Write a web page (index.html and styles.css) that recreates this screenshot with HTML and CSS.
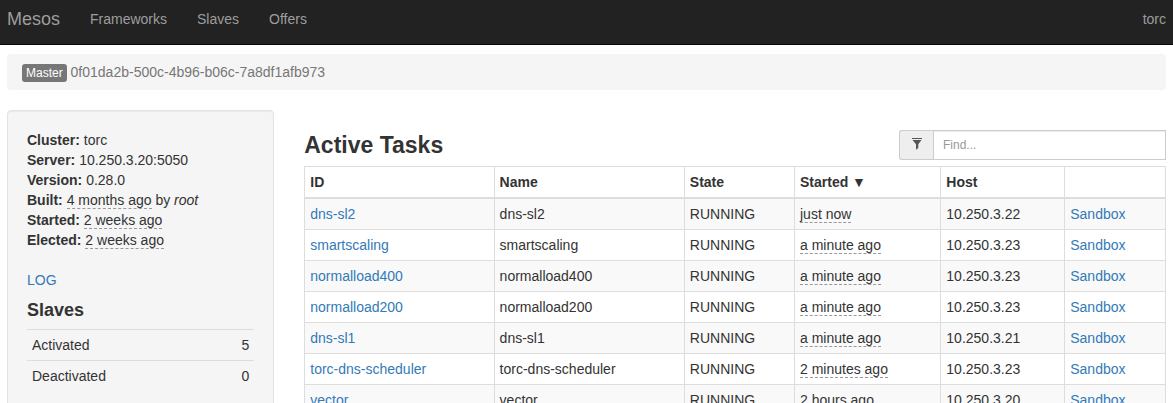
FILE: index.html
```html
<!DOCTYPE html>
<html lang="en">
<head>
<meta charset="utf-8">
<title>Mesos</title>
<link rel="stylesheet" href="styles.css">
</head>
<body>
<nav class="navbar">
  <a class="brand" href="#">Mesos</a>
  <a href="#frameworks">Frameworks</a>
  <a href="#slaves">Slaves</a>
  <a href="#offers">Offers</a>
  <span class="cluster">torc</span>
</nav>
<main class="container">
  <div class="breadcrumb"><span class="badge">Master</span> 0f01da2b-500c-4b96-b06c-7a8df1afb973</div>
  <div class="row">
    <aside class="well">
      <ul class="facts">
        <li><b>Cluster:</b> torc</li>
        <li><b>Server:</b> 10.250.3.20:5050</li>
        <li><b>Version:</b> 0.28.0</li>
        <li><b>Built:</b> <span class="time">4 months ago</span> by <i>root</i></li>
        <li><b>Started:</b> <span class="time">2 weeks ago</span></li>
        <li><b>Elected:</b> <span class="time">2 weeks ago</span></li>
      </ul>
      <a href="#log">LOG</a>
      <h2 class="side-title">Slaves</h2>
      <table class="counts">
        <tbody>
          <tr><th scope="row">Activated</th><td>5</td></tr>
          <tr><th scope="row">Deactivated</th><td>0</td></tr>
        </tbody>
      </table>
    </aside>
    <section class="content">
      <header class="content-head">
        <h1>Active Tasks</h1>
        <div class="search">
          <label class="addon" for="find" aria-label="Filter tasks">
            <svg class="filter" viewBox="0 0 12 12" aria-hidden="true"><path d="M1 0h10v1H1zM1.5 2h9L7.3 6.2V10L5 11.8V6.2z"/></svg>
          </label>
          <input id="find" type="text" placeholder="Find...">
        </div>
      </header>
      <table class="tasks">
        <colgroup>
          <col class="c-id"><col class="c-name"><col class="c-state"><col class="c-started"><col class="c-host"><col>
        </colgroup>
        <thead>
          <tr><th>ID</th><th>Name</th><th>State</th><th>Started ▼</th><th>Host</th><th></th></tr>
        </thead>
        <tbody>
          <tr><td><a href="#t1">dns-sl2</a></td><td>dns-sl2</td><td>RUNNING</td><td><span class="time">just now</span></td><td>10.250.3.22</td><td><a href="#s1">Sandbox</a></td></tr>
          <tr><td><a href="#t2">smartscaling</a></td><td>smartscaling</td><td>RUNNING</td><td><span class="time">a minute ago</span></td><td>10.250.3.23</td><td><a href="#s2">Sandbox</a></td></tr>
          <tr><td><a href="#t3">normalload400</a></td><td>normalload400</td><td>RUNNING</td><td><span class="time">a minute ago</span></td><td>10.250.3.23</td><td><a href="#s3">Sandbox</a></td></tr>
          <tr><td><a href="#t4">normalload200</a></td><td>normalload200</td><td>RUNNING</td><td><span class="time">a minute ago</span></td><td>10.250.3.23</td><td><a href="#s4">Sandbox</a></td></tr>
          <tr><td><a href="#t5">dns-sl1</a></td><td>dns-sl1</td><td>RUNNING</td><td><span class="time">a minute ago</span></td><td>10.250.3.21</td><td><a href="#s5">Sandbox</a></td></tr>
          <tr><td><a href="#t6">torc-dns-scheduler</a></td><td>torc-dns-scheduler</td><td>RUNNING</td><td><span class="time">2 minutes ago</span></td><td>10.250.3.23</td><td><a href="#s6">Sandbox</a></td></tr>
          <tr><td><a href="#t7">vector</a></td><td>vector</td><td>RUNNING</td><td><span class="time">2 hours ago</span></td><td>10.250.3.20</td><td><a href="#s7">Sandbox</a></td></tr>
        </tbody>
      </table>
    </section>
  </div>
</main>
</body>
</html>
```
FILE: styles.css
```css
* { box-sizing: border-box; }

body {
  margin: 0;
  background: #fff;
  color: #333;
  font: 14px/20px "Helvetica Neue", "Liberation Sans", Arial, sans-serif;
}

a { color: #337ab7; text-decoration: none; }

.navbar {
  display: flex;
  gap: 30px;
  padding: 9px 7px 15px;
  background: #222;
  border-bottom: 1px solid #080808;
  color: #9d9d9d;
}
.navbar a { color: inherit; }
.navbar .brand { font-size: 18px; }
.cluster { margin-left: auto; }

.container { padding: 9px 7px 0; }

.breadcrumb {
  padding: 8px 15px;
  margin-bottom: 20px;
  background: #f5f5f5;
  border-radius: 4px;
  color: #777;
}
.badge {
  display: inline-block;
  padding: 0 4px;
  line-height: 18px;
  font-size: 12px;
  background: #777;
  color: #fff;
  border-radius: 3px;
}

.row {
  display: grid;
  grid-template-columns: repeat(12, 1fr);
  column-gap: 30px;
}

.well {
  grid-column: span 3;
  padding: 19px;
  background: #f5f5f5;
  border: 1px solid #e3e3e3;
  border-radius: 4px;
  box-shadow: inset 0 1px 1px rgba(0, 0, 0, 0.05);
}
.facts { list-style: none; margin: 0 0 20px; padding: 0; }
.time { border-bottom: 1px dashed #999; }
.side-title { margin: 10px 0 9px; font-size: 18px; line-height: 20px; }

table { width: 100%; border-collapse: collapse; }
th, td { padding: 5px; text-align: left; }

.counts th, .counts td { border-top: 1px solid #ddd; font-weight: normal; }
.counts td { text-align: right; }

.content { grid-column: span 9; padding-top: 20px; }
.content-head {
  display: flex;
  align-items: center;
  justify-content: space-between;
  margin-bottom: 6px;
}
h1 { margin: 0; font-size: 23px; line-height: 28px; }

.search { display: flex; width: 267px; height: 30px; }
.addon {
  display: flex;
  align-items: center;
  justify-content: center;
  width: 34px;
  padding-bottom: 2px;
  background: #eee;
  border: 1px solid #ccc;
  border-right: 0;
  border-radius: 3px 0 0 3px;
}
.filter { width: 12px; height: 12px; fill: #555; }
.search input {
  flex: 1;
  min-width: 0;
  padding: 5px 9px;
  font: inherit;
  font-size: 12px;
  color: #555;
  background: #fff;
  border: 1px solid #ccc;
  border-radius: 0;
  box-shadow: inset 0 1px 1px rgba(0, 0, 0, 0.075);
}
.search input::placeholder { color: #999; opacity: 1; }

.tasks { table-layout: fixed; }
.tasks th, .tasks td { border: 1px solid #ddd; white-space: nowrap; }
.tasks thead th { height: 31px; border-bottom-width: 2px; }
.tasks tbody tr:nth-child(odd) { background: #f9f9f9; }
.c-id { width: 22%; }
.c-name { width: 22.1%; }
.c-state { width: 12.8%; }
.c-started { width: 17%; }
.c-host { width: 14.4%; }
```
